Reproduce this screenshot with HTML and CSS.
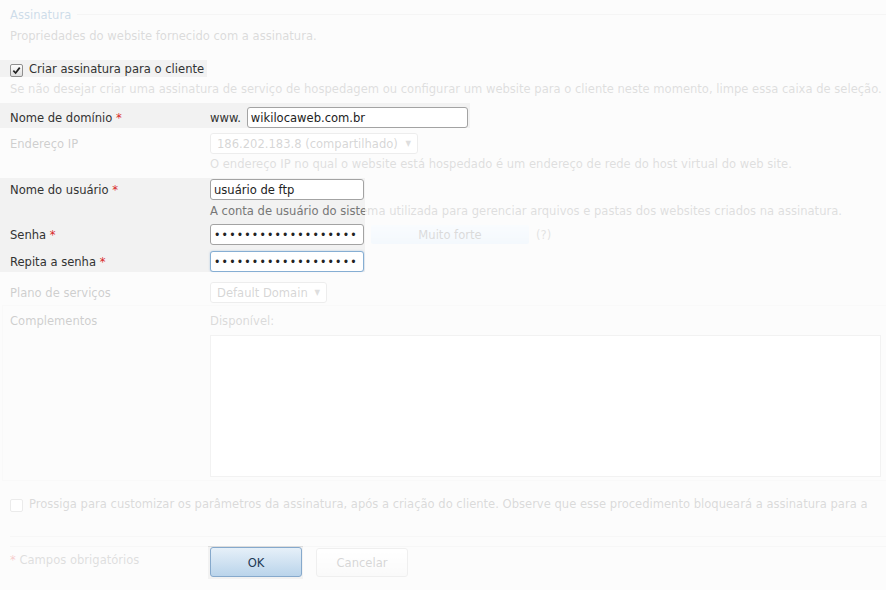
FILE: index.html
```html
<!DOCTYPE html>
<html lang="pt-BR">
<head>
    <meta charset="UTF-8">
    <meta name="viewport" content="width=device-width, initial-scale=1.0">
    <title>Assinatura</title>
    <link rel="stylesheet" href="styles.css">
</head>
<body>
    <div class="page">
        <div class="legend"><span>Assinatura</span></div>
        <p class="desc">Propriedades do website fornecido com a assinatura.</p>

        <label class="check-row">
            <span class="check"><svg viewBox="0 0 10 10" width="9" height="9"><path d="M1.5 5.2 L4 7.8 L8.6 1.8" fill="none" stroke="#222" stroke-width="1.9"/></svg></span>
            Criar assinatura para o cliente
        </label>
        <p class="hint">Se não desejar criar uma assinatura de serviço de hospedagem ou configurar um website para o cliente neste momento, limpe essa caixa de seleção.</p>

        <div class="row row-domain">
            <div class="label">Nome de domínio <span class="req">*</span></div>
            <div class="field">
                <span class="prefix">www.</span>
                <input class="text domain" type="text" value="wikilocaweb.com.br">
            </div>
        </div>

        <div class="row row-ip">
            <div class="label">Endereço IP</div>
            <div class="field col">
                <div class="select ip"><span>186.202.183.8 (compartilhado)</span><span class="arrow">▼</span></div>
                <div class="help">O endereço IP no qual o website está hospedado é um endereço de rede do host virtual do web site.</div>
            </div>
        </div>

        <div class="row row-user">
            <div class="label">Nome do usuário <span class="req">*</span></div>
            <div class="field col">
                <input class="text short" type="text" value="usuário de ftp">
                <div class="help">A conta de usuário do sistema utilizada para gerenciar arquivos e pastas dos websites criados na assinatura.</div>
            </div>
        </div>

        <div class="row row-pass">
            <div class="label">Senha <span class="req">*</span></div>
            <div class="field">
                <input class="text short pass" type="password" value="wikilocaweb12345678">
                <div class="strength">Muito forte</div>
                <span class="qmark">(?)</span>
            </div>
        </div>

        <div class="row row-repeat">
            <div class="label">Repita a senha <span class="req">*</span></div>
            <div class="field">
                <input class="text short pass focus" type="password" value="wikilocaweb12345678">
            </div>
        </div>

        <div class="row row-plan">
            <div class="label">Plano de serviços</div>
            <div class="field">
                <div class="select plan"><span>Default Domain</span><span class="arrow">▼</span></div>
            </div>
        </div>

        <div class="row row-addons">
            <div class="label small">Complementos</div>
            <div class="field col">
                <div class="help dark">Disponível:</div>
                <div class="listbox"></div>
            </div>
        </div>

        <label class="check-row next">
            <span class="check off"></span>
            Prossiga para customizar os parâmetros da assinatura, após a criação do cliente. Observe que esse procedimento bloqueará a assinatura para a
        </label>

        <div class="rule"></div>

        <div class="footer">
            <div class="required"><span class="req">*</span> Campos obrigatórios</div>
            <button class="btn ok">OK</button>
            <button class="btn cancel">Cancelar</button>
        </div>

        <!-- tutorial mask: white veil with holes over the highlighted fields -->
        <svg class="mask" width="886" height="590" viewBox="0 0 886 590">
            <path fill-rule="evenodd" d="M0 0H886V590H0Z M0 60H207V77H0Z M0 103H470V128H0Z M0 178H365V272H0Z M208 546H303V579H208Z"/>
        </svg>
    </div>
</body>
</html>
```

FILE: styles.css
```css
*{
    margin: 0;
    padding: 0;
    box-sizing: border-box;
}

body{
    background-color: #f2f2f2;
    font-family: "DejaVu Sans Condensed", "Liberation Sans", sans-serif;
    font-size: 12.85px;
    color: #333;
}

.page{
    position: relative;
    width: 886px;
    height: 590px;
    overflow: hidden;
    white-space: nowrap;
}

.legend{
    display: flex;
    align-items: center;
    gap: 6px;
    height: 28px;
    padding-left: 10px;
    color: #2f6ca3;
}

.legend::after{
    content: "";
    flex: 1;
    border-top: 1px solid #d6d6d6;
}

.desc{
    padding-left: 10px;
    line-height: 16px;
    margin-bottom: 16px;
    color: #6a6a6a;
}

.check-row{
    display: flex;
    align-items: center;
    gap: 6px;
    height: 18px;
    padding-left: 10px;
    line-height: 18px;
}

.check{
    display: flex;
    align-items: center;
    justify-content: center;
    width: 13px;
    height: 13px;
    margin-top: 3px;
    border: 1px solid #8f8f8f;
    border-radius: 2px;
    background: linear-gradient(#fdfdfd, #dedede);
}

.check.off{
    background: #fff;
    border-color: #aaa;
}

.hint{
    padding-left: 10px;
    margin-top: 2px;
    margin-bottom: 5px;
    line-height: 18px;
    color: #777;
}

.row{
    display: grid;
    grid-template-columns: 210px 1fr;
}

.label{
    padding-left: 10px;
    line-height: 21px;
}

.label.small{
    line-height: 16px;
}

.req{
    color: #d92a2a;
}

.field{
    display: flex;
    align-items: center;
}

.field.col{
    flex-direction: column;
    align-items: flex-start;
}

.prefix{
    margin-right: 6px;
}

.text{
    height: 21px;
    padding: 0 3px;
    border: 1px solid #a3a3a3;
    border-radius: 3px;
    background-color: #fff;
    font-family: inherit;
    font-size: 12.85px;
    color: #222;
    outline: none;
}

.domain{
    width: 221px;
}

.short{
    width: 154px;
}

.pass{
    font-size: 12px;
    letter-spacing: 1.2px;
}

.focus{
    border-color: #86aed3;
    box-shadow: 0 0 2px rgba(110, 160, 210, 0.5);
}

.select{
    display: flex;
    justify-content: space-between;
    height: 21px;
    padding: 0 6px;
    border: 1px solid #b5b5b5;
    border-radius: 3px;
    background-color: #fff;
    line-height: 19px;
    color: #555;
}

.select .arrow{
    font-size: 8px;
    color: #777;
}

.ip{
    width: 208px;
}

.plan{
    width: 117px;
}

.help{
    line-height: 16px;
    color: #777;
}

.help.dark{
    color: #666;
}

.row-domain{
    padding-top: 4px;
}

.row-ip{
    padding-top: 5px;
    padding-bottom: 6px;
}

.row-ip .help{
    margin-top: 2px;
}

.row-user{
    padding-top: 1px;
}

.row-user .help{
    margin-top: 3px;
}

.row-pass{
    padding-top: 5px;
}

.row-repeat{
    padding-top: 6px;
}

.row-plan{
    padding-top: 10px;
}

.row-addons{
    margin-top: 2px;
    margin-left: 2px;
    padding-top: 7px;
    padding-bottom: 3px;
    grid-template-columns: 207px 1fr;
    border: 1px solid #e4e4e4;
    border-right: none;
}

.row-addons .label{
    padding-left: 7px;
}

.listbox{
    width: 671px;
    height: 142px;
    margin-top: 6px;
    border: 1px solid #c8c8c8;
    background-color: #fff;
}

.strength{
    width: 158px;
    height: 19px;
    margin-left: 7px;
    border-radius: 2px;
    background: linear-gradient(#e6f1fb, #cfe3f5);
    text-align: center;
    line-height: 19px;
    color: #666;
}

.qmark{
    margin-left: 7px;
    color: #888;
}

.check-row.next{
    margin-top: 14px;
    color: #666;
}

.rule{
    margin: 23px 0 0 10px;
    height: 11px;
    border-top: 1px solid #ddd;
    border-bottom: 1px solid #ddd;
}

.footer{
    display: flex;
    align-items: flex-start;
}

.required{
    width: 210px;
    padding: 5px 0 0 10px;
    line-height: 16px;
    color: #777;
}

.btn{
    width: 92px;
    height: 30px;
    border-radius: 3px;
    font-family: inherit;
    font-size: 12.85px;
    cursor: pointer;
}

.ok{
    border: 1px solid #86a9cc;
    background: linear-gradient(#e6f0f9, #bad4eb);
    color: #1d3955;
}

.cancel{
    height: 29px;
    margin: 1px 0 0 14px;
    border: 1px solid #bdbdbd;
    background: linear-gradient(#ffffff, #e9e9e9);
    color: #555;
}

.mask{
    position: absolute;
    top: 0;
    left: 0;
    fill: rgba(255, 255, 255, 0.76);
    pointer-events: none;
}
```
